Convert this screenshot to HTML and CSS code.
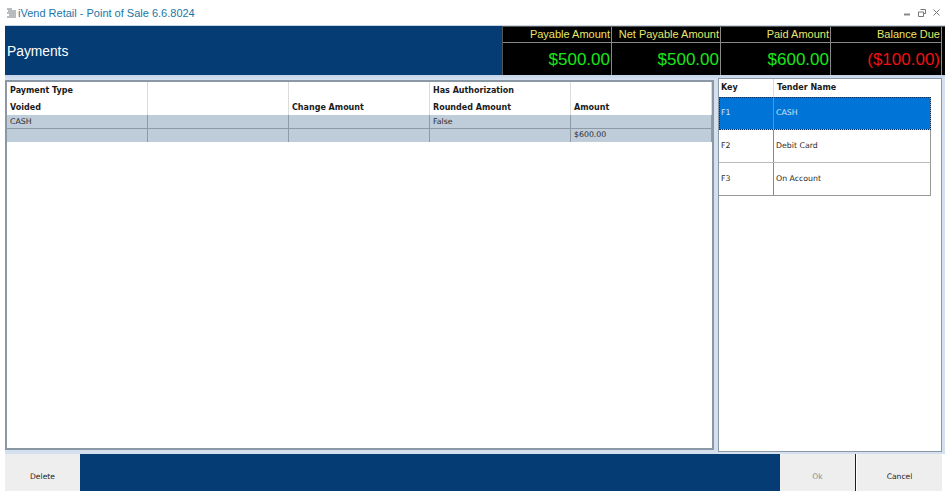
FILE: index.html
```html
<!DOCTYPE html>
<html lang="en">
<head>
<meta charset="utf-8">
<title>iVend Retail - Point of Sale 6.6.8024</title>
<link rel="stylesheet" href="styles.css">
</head>
<body>
<div class="app">
  <div class="titlebar">
    <div class="title-left">
      <svg class="app-icon" width="11" height="10" viewBox="0 0 11 10"><path d="M1 1h5M2 3h8M1 5h9M3 7h7M1 9h9" stroke="#6f7a80" stroke-width="1" fill="none"/></svg>
      <span class="title-text">iVend Retail - Point of Sale 6.6.8024</span>
    </div>
    <div class="win-controls">
      <svg width="7" height="7" viewBox="0 0 7 7"><path d="M0 5.5h6" stroke="#8a8a8a" stroke-width="2"/></svg>
      <svg width="8" height="8" viewBox="0 0 8 8"><path d="M2.5.5h5v4h-2M.5 3h5v4.5h-5z" stroke="#777" fill="none"/></svg>
      <svg width="7" height="7" viewBox="0 0 7 7"><path d="M.5.5l6 6M6.5.5l-6 6" stroke="#777" fill="none"/></svg>
    </div>
  </div>
  <header class="banner">
    <h1 class="banner-title">Payments</h1>
    <div class="kpis">
      <div class="kpi kpi-1"><div class="kpi-label">Payable Amount</div><div class="kpi-value green">$500.00</div></div>
      <div class="kpi kpi-2"><div class="kpi-label">Net Payable Amount</div><div class="kpi-value green">$500.00</div></div>
      <div class="kpi kpi-3"><div class="kpi-label">Paid Amount</div><div class="kpi-value green">$600.00</div></div>
      <div class="kpi kpi-4"><div class="kpi-label">Balance Due</div><div class="kpi-value red">($100.00)</div></div>
    </div>
  </header>
  <main class="content">
    <section class="grid-panel">
      <div class="pay-head">
        <div class="hc">Payment Type</div><div class="hc"></div><div class="hc"></div><div class="hc">Has Authorization</div><div class="hc"></div>
        <div class="hc">Voided</div><div class="hc"></div><div class="hc">Change Amount</div><div class="hc">Rounded Amount</div><div class="hc">Amount</div>
      </div>
      <div class="pay-row row-a">
        <div class="dc">CASH</div><div class="dc"></div><div class="dc"></div><div class="dc">False</div><div class="dc"></div>
      </div>
      <div class="pay-row row-b">
        <div class="dc"></div><div class="dc"></div><div class="dc"></div><div class="dc"></div><div class="dc">$600.00</div>
      </div>
    </section>
    <aside class="tender-panel">
      <div class="tender-row tender-head"><div class="tk">Key</div><div class="tn">Tender Name</div></div>
      <div class="tender-row tender-item selected"><div class="tk">F1</div><div class="tn">CASH</div></div>
      <div class="tender-row tender-item"><div class="tk">F2</div><div class="tn">Debit Card</div></div>
      <div class="tender-row tender-item"><div class="tk">F3</div><div class="tn">On Account</div></div>
    </aside>
  </main>
  <footer class="footer">
    <button class="btn btn-delete">Delete</button>
    <div class="footer-fill"></div>
    <button class="btn btn-ok" disabled>Ok</button>
    <button class="btn btn-cancel">Cancel</button>
  </footer>
</div>
</body>
</html>
```

FILE: styles.css
```css
* { box-sizing: border-box; }
html, body { margin: 0; padding: 0; background: #fff; }
body { font-family: "DejaVu Sans", sans-serif; }
.app { width: 945px; height: 491px; display: flex; flex-direction: column; overflow: hidden; background: #fff; }

.titlebar { height: 25px; display: flex; justify-content: space-between; align-items: center; padding: 0 5px 0 6px; }
.title-left { display: flex; align-items: center; gap: 1px; }
.app-icon { display: block; }
.title-text { font: 11px "Liberation Sans", sans-serif; color: #1b75a8; }
.win-controls { display: flex; align-items: center; gap: 7px; }
.win-controls svg { display: block; }

.banner { height: 50px; margin-left: 5px; display: flex; justify-content: space-between; background: #053c74; border-top: 1px solid #c8d6e6; }
.banner-title { margin: 0; align-self: center; padding: 2px 0 0 2px; font: 400 13.8px "Liberation Sans", sans-serif; color: #fff; }
.kpis { display: grid; grid-template-columns: 109px 109px 110px 111px; width: 443px; background: #000; border: 1px solid #555; border-width: 1px 0 0 1px; }
.kpi { display: flex; flex-direction: column; text-align: right; border-right: 1px solid #888; }
.kpi-label { height: 16px; padding-right: 1px; font: 11px/15px "Liberation Sans", sans-serif; color: #e6e66a; border-bottom: 1px solid #888; white-space: nowrap; }
.kpi-value { flex: 1; padding: 2px 1px 0 0; font: 17px/30px "Liberation Sans", sans-serif; white-space: nowrap; }
.green { color: #19e619; }
.red { color: #ee1111; }

.content { flex: 1; min-height: 0; margin-left: 5px; padding: 3px 3px 2px 0; display: flex; gap: 4px; background: linear-gradient(#c3d3e8, #d5e0ee 4px, #d5e0ee); }
.grid-panel { width: 709px; margin: 2px 0; background: #fff; border: 2px solid #8a97a5; }
.pay-head, .pay-row { display: grid; grid-template-columns: 141px 141px 141px 141px 1fr; }
.hc { height: 16.5px; padding: 1px 0 0 3px; font: 700 8px/15px "DejaVu Sans", sans-serif; color: #1a1a1a; border-right: 1px solid #dcdcdc; white-space: nowrap; }
.pay-row { background: #bfccda; border-bottom: 1px solid #8f9aa6; }
.row-a { height: 14px; }
.row-b { height: 13px; border-bottom: 0; }
.row-a .dc { padding-top: 1px; }
.dc { padding-left: 3px; font: 7.8px/12px "DejaVu Sans", sans-serif; color: #2a2a2a; border-right: 1px solid #8f9aa6; white-space: nowrap; }

.tender-panel { flex: 1; background: #fff; border: 1px solid #8a97a5; display: flex; flex-direction: column; padding-right: 10px; }
.tender-row { display: grid; grid-template-columns: 55px 1fr; align-items: center; }
.tender-head { height: 18px; font: 700 8px/18px "DejaVu Sans", sans-serif; color: #1a1a1a; }
.tender-head .tk { padding-left: 2px; border-right: 1px solid #dcdcdc; }
.tender-head .tn { padding-left: 3px; }
.tender-item { height: 33px; font: 7.8px/32px "DejaVu Sans", sans-serif; color: #2a2a2a; border-bottom: 1px solid #bbb; border-right: 1px solid #999; }
.tender-item .tk { height: 100%; padding-left: 2px; border-right: 1px solid #888; }
.tender-item .tn { padding-left: 2px; }
.tender-item:last-child { border-bottom-color: #999; }
.selected { background: #0174d8; color: #d5e6f5; outline: 1px dotted #06305f; outline-offset: -1px; }

.footer { height: 37px; margin-left: 5px; display: flex; background: #fff; }
.footer-fill { width: 700px; background: #053c74; }
.btn { border: 0; padding: 8px 0 0; background: #eeeeee; font: 7.6px "DejaVu Sans", sans-serif; color: #222; }
.btn-delete { width: 75px; }
.btn-ok { width: 76px; color: #8a8a8a; border-right: 1px solid #0b2246; }
.btn-cancel { width: 85px; margin-left: 1px; }
```
